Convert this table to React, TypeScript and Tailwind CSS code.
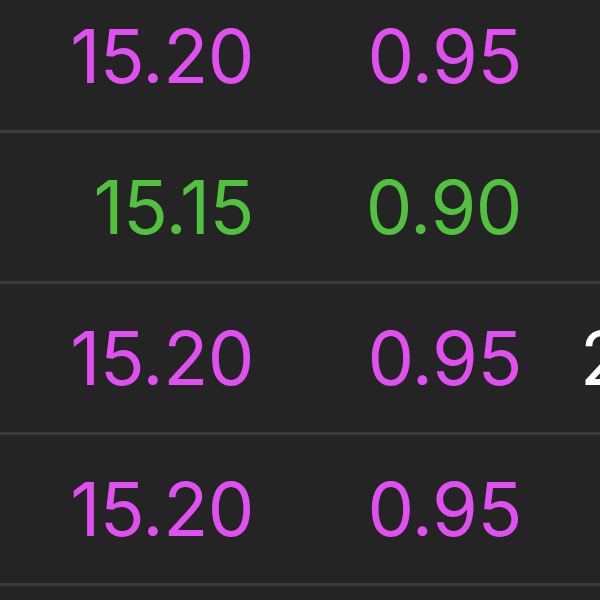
const rows = [
    { price: "15.20", change: "0.95", tone: "pink", extra: "" },
    { price: "15.15", change: "0.90", tone: "green", extra: "" },
    { price: "15.20", change: "0.95", tone: "pink", extra: "2" },
    { price: "15.20", change: "0.95", tone: "pink", extra: "" },
];

export default function App() {
    return (
        <div className="w-[600px] h-[600px] overflow-hidden bg-[#242424]">
            <div className="-mt-[18px] flex flex-col font-['Inter',sans-serif] font-normal text-[74px] leading-none tracking-[-0.5px]">
                {rows.map((r, i) => (
                    <div
                        key={i}
                        className="h-[151px] border-b-[3px] border-[#3b3b3b] grid grid-cols-[254px_268px_78px] items-center whitespace-nowrap"
                    >
                        <span className={`text-right ${r.tone === "green" ? "text-[#52c13f]" : "text-[#e04ff0]"}`}>
                            {r.price}
                        </span>
                        <span className={`text-right ${r.tone === "green" ? "text-[#52c13f]" : "text-[#e04ff0]"}`}>
                            {r.change}
                        </span>
                        <span className="pl-[58px] text-white">{r.extra}</span>
                    </div>
                ))}
            </div>
        </div>
    );
}
